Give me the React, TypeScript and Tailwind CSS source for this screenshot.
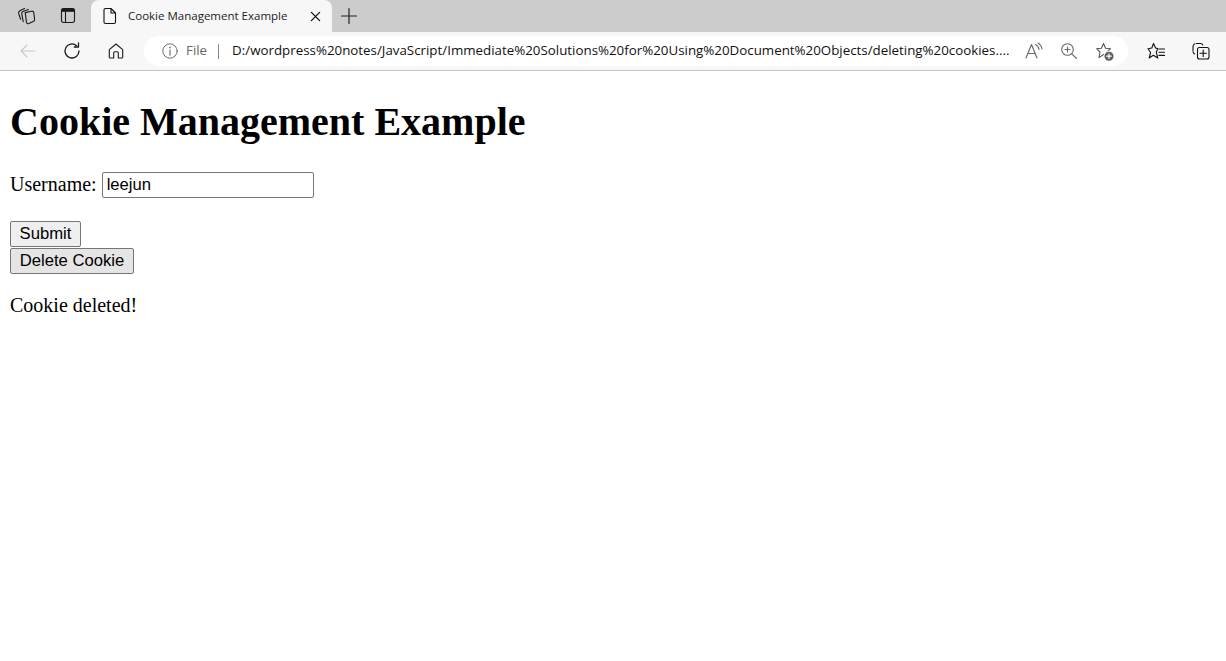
import React from "react";

const Ico = ({ children, size = 20, className = "" }: { children: React.ReactNode; size?: number; className?: string }) => (
  <svg width={size} height={size} viewBox="0 0 20 20" fill="none" stroke="currentColor" strokeWidth="1.1" strokeLinecap="round" strokeLinejoin="round" className={`shrink-0 ${className}`}>
    {children}
  </svg>
);

export default function App() {
  return (
    <div className="min-h-[661px] bg-white text-black overflow-hidden">
      <div className="h-8 bg-[#cccccc] flex items-end font-['Open_Sans',sans-serif]">
        <div className="w-[91px] h-8 flex items-center pl-[16px] gap-[22px] text-[#1a1a1a]">
          <Ico>
            <path d="M9.2 6.6 L15.4 5.2 Q17.4 4.9 17.8 6.6 L18.6 13.4 Q18.8 15 17.3 15.6 L12.8 17.6 Q10.9 18.2 10.5 16.4 Z" />
            <path d="M7.2 15.6 L5.7 7.6 Q5.5 6 7 5.4 L12.5 3.6" />
            <path d="M4.6 13.2 L2.6 7.4 Q2.2 5.6 3.8 4.7 L8.6 2.4" />
          </Ico>
          <Ico>
            <rect x="3.5" y="2.5" width="13" height="14" rx="2.2" />
            <path d="M3.5 4.3 H16.5" strokeWidth="3" strokeLinecap="butt" />
            <path d="M7.5 5 V16.5" />
          </Ico>
        </div>
        <div className="w-[241px] h-[32px] bg-[#f7f7f7] rounded-t-lg flex items-center pl-[9px] pr-[11px]">
          <Ico className="text-[#111]">
            <path d="M5.5 2.5 H11 L15.5 7 V16 Q15.5 17.5 14 17.5 H5.5 Q4 17.5 4 16 V4 Q4 2.5 5.5 2.5 Z M11 2.5 V7 H15.5" />
          </Ico>
          <span className="ml-[8px] text-[11.5px] text-[#222] whitespace-nowrap flex-1">Cookie Management Example</span>
          <Ico size={11} className="text-[#111]"><path d="M2.5 2.5 L17.5 17.5 M17.5 2.5 L2.5 17.5" strokeWidth="2.4" /></Ico>
        </div>
        <div className="h-8 flex items-center pl-[7px] text-[#222]">
          <Ico><path d="M10 2.5 V17.5 M2.5 10 H17.5" strokeWidth="1.2" /></Ico>
        </div>
      </div>

      <div className="h-[39px] bg-[#f7f7f7] border-b border-[#c4c4c4] flex items-center font-['Open_Sans',sans-serif] pl-[18px]">
        <Ico className="text-[#c8c8c8]"><path d="M17 10 H3 M9 4 L3 10 L9 16" /></Ico>
        <Ico className="ml-[24px] text-[#1a1a1a]">
          <path d="M17 10 A7 7 0 1 1 14.6 4.7" strokeWidth="1.3" />
          <path d="M16.5 1.8 V6 H12.3" strokeWidth="1.3" />
        </Ico>
        <Ico className="ml-[24px] text-[#1a1a1a]">
          <path d="M3.3 8.6 L10 3 L16.7 8.6 V16 Q16.7 17 15.7 17 H12.3 V11.8 Q12.3 10.8 11.3 10.8 H8.7 Q7.7 10.8 7.7 11.8 V17 H4.3 Q3.3 17 3.3 16 Z" />
        </Ico>
        <div className="ml-[18px] w-[984px] h-[30px] rounded-[15px] bg-white flex items-center pl-[17px]">
          <Ico size={18} className="text-[#6b6b6b]">
            <circle cx="10" cy="10" r="8" />
            <path d="M10 9 V14.5" strokeWidth="1.3" />
            <path d="M10 5.8 V6.4" strokeWidth="1.6" />
          </Ico>
          <span className="ml-[7px] text-[13.33px] text-[#666]">File</span>
          <span className="ml-[11px] w-px h-[15px] bg-[#8a8a8a]" />
          <span className="ml-[13px] w-[777px] text-[13.33px] text-[#111] whitespace-nowrap overflow-hidden">
            D:/wordpress%20notes/JavaScript/Immediate%20Solutions%20for%20Using%20Document%20Objects/deleting%20cookies....
          </span>
          <Ico className="ml-[15px] text-[#666]">
            <path d="M2 17 L7.5 3.5 L13 17 M4 12.5 H11" />
            <path d="M11.5 3.5 Q14.5 5 15 8.5 M14 2 Q17.5 4 18 8" />
          </Ico>
          <Ico className="ml-[15px] text-[#666]">
            <circle cx="8.5" cy="8.5" r="5.8" />
            <path d="M6 8.5 H11 M8.5 6 V11 M12.8 12.8 L17.5 17.5" />
          </Ico>
          <Ico className="ml-[16px] text-[#555]">
            <path d="M8.5 2.5 L10.6 7.3 L15.6 7.7 L12 11 L13 16 L8.5 13.6 L4 16.5 L5 11 L1.6 7.7 L6.4 7.3 Z" />
            <circle cx="14" cy="15.2" r="5.4" fill="#f7f7f7" stroke="none" />
            <circle cx="14" cy="15.2" r="4.5" fill="#5e5e5e" stroke="none" />
            <path d="M14 12.9 V17.5 M11.7 15.2 H16.3" stroke="#fff" strokeWidth="1.2" />
          </Ico>
        </div>
        <Ico className="ml-[19px] text-[#111]">
          <path d="M6.5 2.5 L8.6 7 L10.8 7.6 L9.3 11.3 L10.8 17 L6.3 14.2 L2.2 17 L3.6 11.5 L1 7.7 L4.8 7 Z" />
          <path d="M12 8 H17.5 M12 11.3 H17.5 M12 14.4 H17.5" />
        </Ico>
        <Ico className="ml-[24px] text-[#111]">
          <path d="M5.5 2.5 H9.5 Q11.2 2.5 11.8 4 M2 9.5 V5.5 Q2 3.5 4 2.8 M3.6 13 Q2 12.3 2 10.5" />
          <rect x="6.5" y="6.5" width="11.5" height="11.5" rx="2" />
          <path d="M12.2 9 V15.5 M9 12.2 H15.5" />
        </Ico>
      </div>

      <main className="px-[10px] font-['Liberation_Serif',serif] text-[20px]">
        <h1 className="pt-[28px] text-[40px] font-bold leading-[46px]">Cookie Management Example</h1>
        <div className="mt-[26px] h-[27px] flex items-center">
          <label className="leading-[23px]">Username:</label>
          <input
            readOnly
            value="leejun"
            className="ml-[5px] w-[212px] h-[26px] border border-[#767676] rounded-[2px] px-[4px] font-['Liberation_Sans',sans-serif] text-[16.67px] text-black outline-none"
          />
        </div>
        <div className="mt-[23px] flex flex-col items-start gap-px font-['Liberation_Sans',sans-serif] text-[16.67px]">
          <button className="h-[26px] w-[71px] border border-[#767676] rounded-[2px] bg-[#efefef] leading-none">Submit</button>
          <button className="h-[26px] w-[124px] border border-[#767676] rounded-[2px] bg-[#e5e5e5] leading-none">Delete Cookie</button>
        </div>
        <p className="mt-[20px] leading-[23px]">Cookie deleted!</p>
      </main>
    </div>
  );
}
